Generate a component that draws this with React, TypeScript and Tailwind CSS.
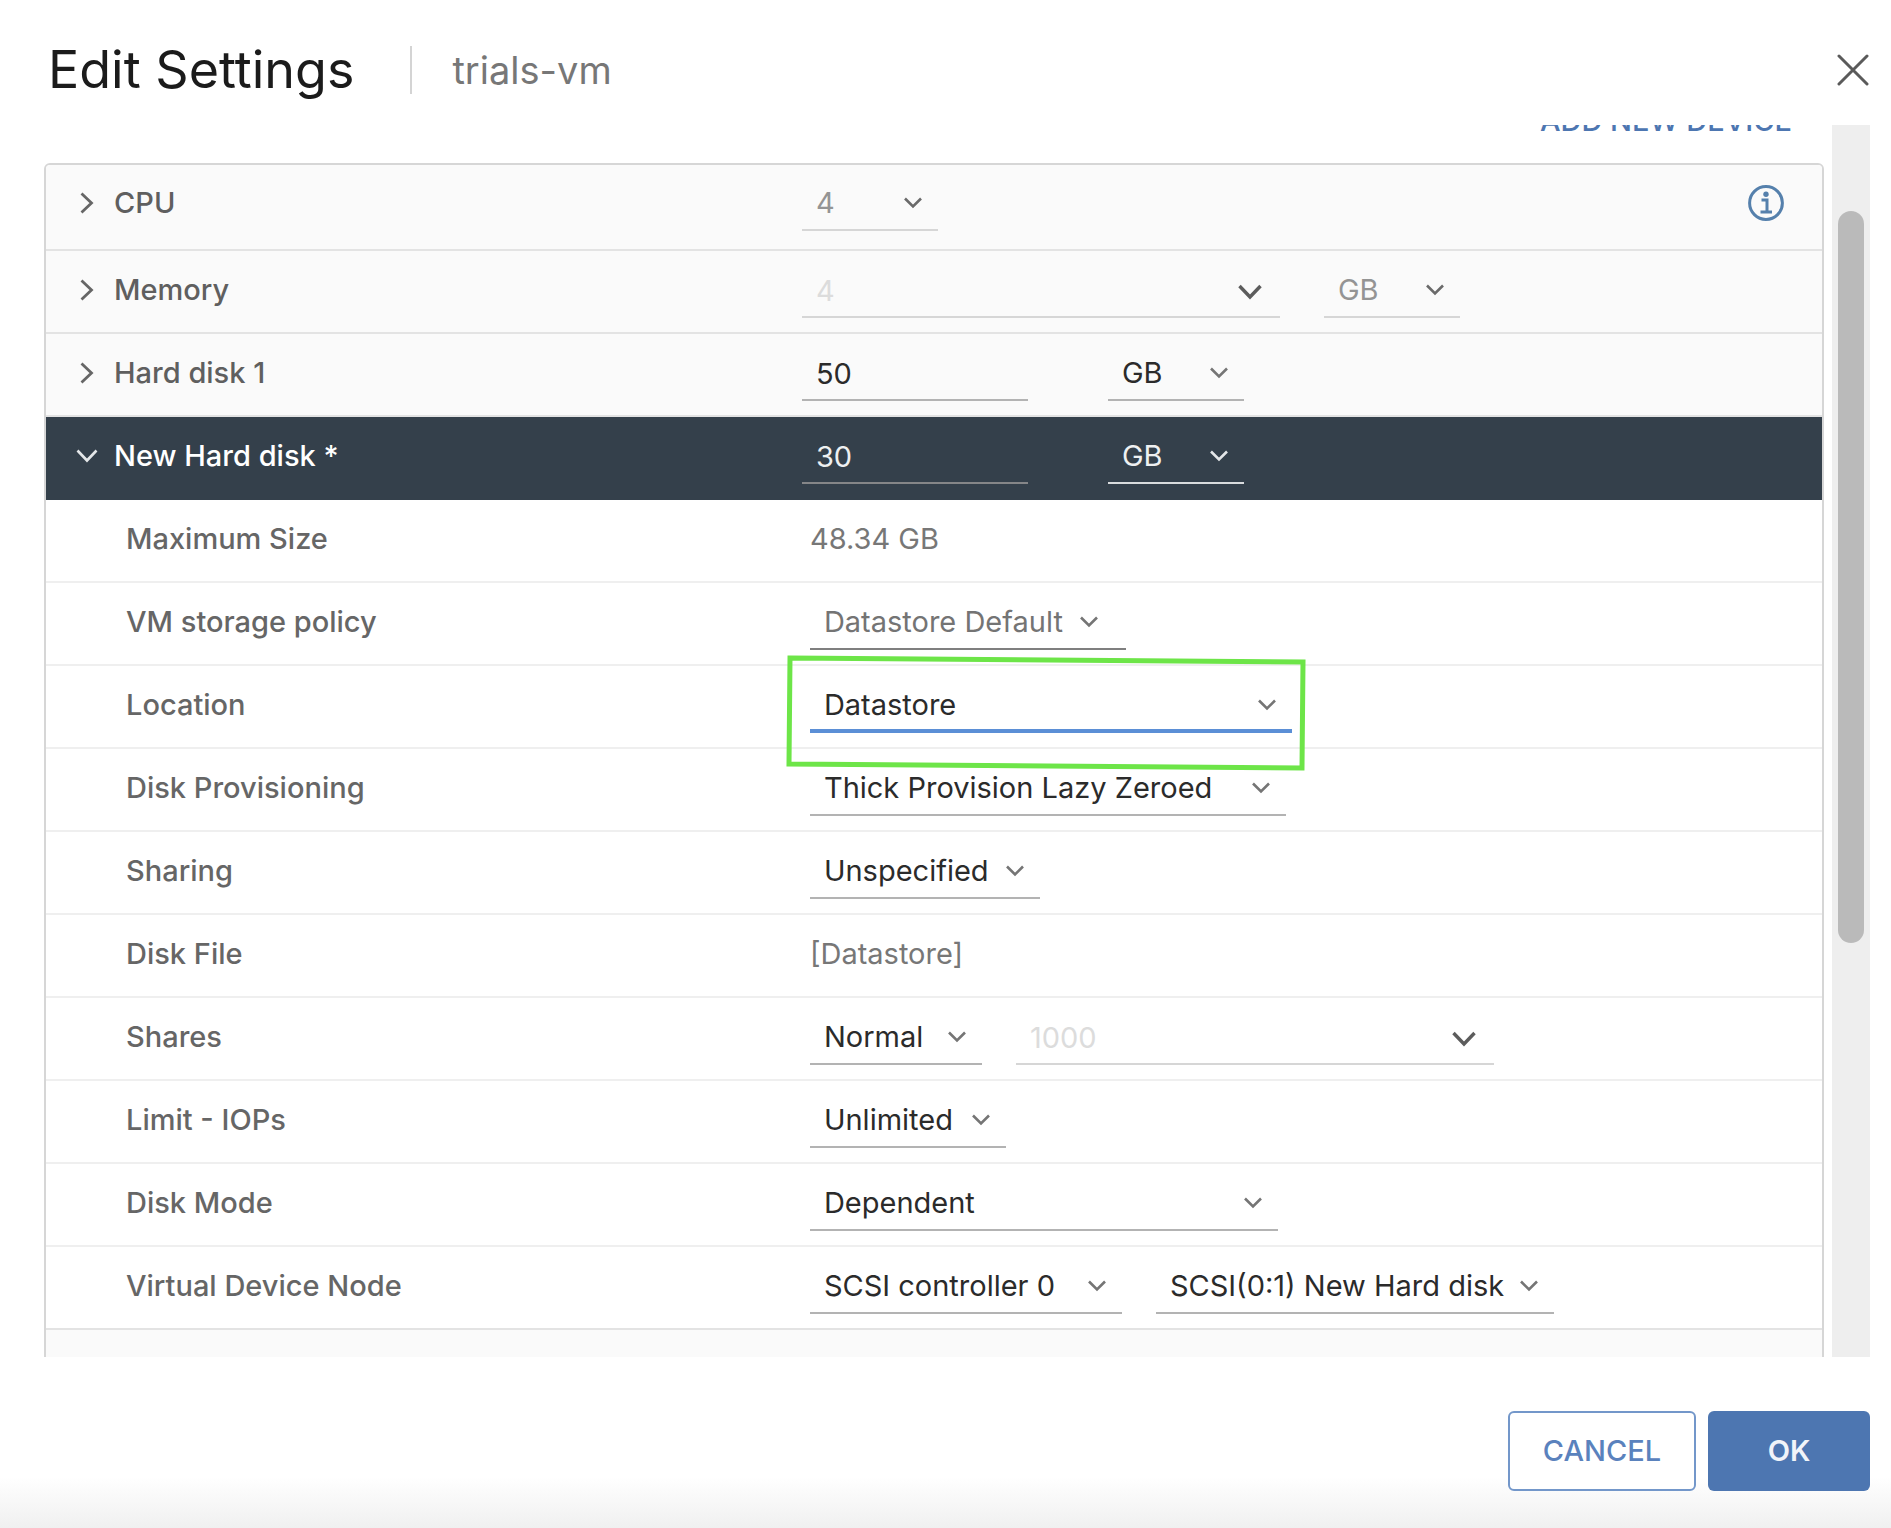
import React from "react";

type Tone = "normal" | "muted" | "inverse" | "focus" | "policy";

const selectTone: Record<Tone, string> = {
  normal: "border-b-2 border-[#b3b3b3] pb-2 text-[#2b2b2b]",
  muted: "border-b-2 border-[#d6d6d6] pb-2 text-[#949494]",
  inverse: "border-b-2 border-[#d9dcde] pb-2 text-[#eef0f1]",
  focus: "border-b-4 border-[#5b8fd6] pb-1.5 text-[#2b2b2b]",
  policy: "border-b-2 border-[#7f7f7f] pb-2 text-[#747474]",
};

const caretTone: Record<Tone, string> = {
  normal: "right-4 text-[#757575]",
  muted: "right-4 text-[#6a6a6a]",
  inverse: "right-4 text-[#e4e7e9]",
  focus: "right-4 text-[#757575]",
  policy: "right-7 text-[#757575]",
};

function Caret({ className }: { className: string }) {
  return (
    <svg
      aria-hidden="true"
      viewBox="0 0 18 12"
      className={"pointer-events-none absolute top-3 h-3 w-[18px] " + className}
      fill="none"
      stroke="currentColor"
      strokeWidth="2.6"
    >
      <path d="M1 1.5 L9 9.5 L17 1.5" />
    </svg>
  );
}

function Select({
  id,
  label,
  value,
  width,
  tone = "normal",
  disabled = false,
}: {
  id: string;
  label?: string;
  value: string;
  width: string;
  tone?: Tone;
  disabled?: boolean;
}) {
  return (
    <div className={"relative shrink-0 " + width}>
      <select
        id={id}
        aria-label={label}
        defaultValue={value}
        disabled={disabled}
        className={
          "block w-full appearance-none rounded-none bg-transparent pl-3.5 leading-9 opacity-100 outline-none " +
          selectTone[tone]
        }
      >
        <option>{value}</option>
      </select>
      <Caret className={caretTone[tone]} />
    </div>
  );
}

function Combo({ id, label, value }: { id: string; label?: string; value: string }) {
  return (
    <div className="relative w-[478px] shrink-0">
      <input
        id={id}
        aria-label={label}
        defaultValue={value}
        disabled
        className="block h-[46px] w-full border-b-2 border-[#d6d6d6] bg-transparent pb-2 pl-3.5 leading-9 text-[#dcdcdc] outline-none"
      />
      <svg
        aria-hidden="true"
        viewBox="0 0 24 16"
        className="pointer-events-none absolute top-3 right-[18px] h-4 w-6"
        fill="none"
        stroke="#5c5c5c"
        strokeWidth="3.4"
      >
        <path d="M1.5 2 L12 13 L22.5 2" />
      </svg>
    </div>
  );
}

function SizeInput({ id, value, tone }: { id: string; value: string; tone: string }) {
  return (
    <input
      id={id}
      defaultValue={value}
      className={
        "block h-[46px] w-[226px] shrink-0 border-b-2 bg-transparent pb-2 pl-3.5 leading-9 outline-none " + tone
      }
    />
  );
}

function DeviceRow({
  name,
  htmlFor,
  open = false,
  tall = false,
  children,
}: {
  name: string;
  htmlFor: string;
  open?: boolean;
  tall?: boolean;
  children: React.ReactNode;
}) {
  const row = open
    ? "border-[#34404b] bg-[#34404b] text-white"
    : "border-[#e3e3e3] bg-[#fafafa] text-[#5f5f5f]";
  const height = tall ? "h-[85px]" : "h-[83px]";
  const labelPad = tall ? "pb-7" : "pb-6";
  const valuePad = tall ? "pb-[18px]" : "pb-3.5";
  return (
    <tr className={"border-b-2 " + row + " " + height}>
      <th scope="row" className={"w-[42%] pl-[30px] text-left align-bottom font-medium " + labelPad}>
        <div className="flex items-center gap-4">
          <button
            type="button"
            aria-label={"Toggle " + name}
            aria-expanded={open}
            className="flex w-[22px] justify-center"
          >
            {open ? (
              <svg viewBox="0 0 22 14" className="h-3.5 w-[22px]" fill="none" stroke="#e4e7e9" strokeWidth="2.6">
                <path d="M1.5 1.5 L11 11.5 L20.5 1.5" />
              </svg>
            ) : (
              <svg viewBox="0 0 14 22" className="h-[22px] w-3.5" fill="none" stroke="#666666" strokeWidth="2.8">
                <path d="M1.5 1.5 L11.5 11 L1.5 20.5" />
              </svg>
            )}
          </button>
          <label htmlFor={htmlFor}>{name}</label>
        </div>
      </th>
      <td className={"pl-2.5 align-bottom " + valuePad}>{children}</td>
    </tr>
  );
}

function DetailRow({
  name,
  htmlFor,
  last = false,
  text = false,
  children,
}: {
  name: string;
  htmlFor?: string;
  last?: boolean;
  text?: boolean;
  children: React.ReactNode;
}) {
  return (
    <tr className={"h-[83px] border-b-2 bg-white " + (last ? "border-[#e3e3e3]" : "border-[#efefef]")}>
      <th scope="row" className="w-[42%] pb-6 pl-20 text-left align-bottom font-medium text-[#666666]">
        {htmlFor ? <label htmlFor={htmlFor}>{name}</label> : name}
      </th>
      <td className={"pl-[18px] align-bottom text-[#777777] " + (text ? "pb-6" : "pb-3.5")}>{children}</td>
    </tr>
  );
}

export default function App() {
  return (
    <main
      role="dialog"
      aria-labelledby="dialog-title"
      className="flex h-screen flex-col overflow-hidden bg-white font-['Inter','Liberation_Sans',sans-serif] text-[29px] leading-9"
    >
      <header className="flex h-[125px] shrink-0 items-center justify-between pt-3.5 pr-[22px] pl-12">
        <div className="flex items-center">
          <h1 id="dialog-title" className="text-[52px] leading-[60px] text-[#1b1b1b]">
            Edit Settings
          </h1>
          <div className="mr-10 ml-14 h-12 w-0.5 bg-[#d4d4d4]" />
          <p className="text-[38px] leading-[60px] text-[#777777]">trials-vm</p>
        </div>
        <button type="button" aria-label="Close">
          <svg viewBox="0 0 32 32" className="size-8" fill="none" stroke="#5a5a5a" strokeWidth="3" strokeLinecap="round">
            <path d="M2 2 L30 30 M30 2 L2 30" />
          </svg>
        </button>
      </header>

      <div className="flex min-h-0 flex-1 gap-2 pr-[21px] pl-11">
        <section className="flex min-w-0 flex-1 flex-col overflow-hidden">
          <button type="button" className="-mt-[22px] mr-8 mb-6 shrink-0 self-end font-medium text-[#4d76b1]">
            ADD NEW DEVICE
          </button>
          <div className="shrink-0 overflow-hidden rounded-t-md border-2 border-[#d6d6d6]">
            <table className="w-full table-fixed border-collapse">
              <tbody>
                <DeviceRow name="CPU" htmlFor="cpu" tall>
                  <div className="flex items-start justify-between pr-[38px]">
                    <Select id="cpu" value="4" width="w-[136px]" tone="muted" disabled />
                    <button type="button" aria-label="CPU information">
                      <svg viewBox="0 0 36 36" className="size-9" fill="none">
                        <circle cx="18" cy="18" r="16.4" stroke="#5580ac" strokeWidth="3" />
                        <circle cx="18" cy="9.2" r="2.7" fill="#5580ac" />
                        <path d="M13.5 15 H19 V27 M12.5 27 H24" stroke="#5580ac" strokeWidth="3" />
                      </svg>
                    </button>
                  </div>
                </DeviceRow>
                <DeviceRow name="Memory" htmlFor="memory">
                  <div className="flex gap-11">
                    <Combo id="memory" value="4" />
                    <Select id="memory-unit" label="Memory unit" value="GB" width="w-[136px]" tone="muted" disabled />
                  </div>
                </DeviceRow>
                <DeviceRow name="Hard disk 1" htmlFor="disk1">
                  <div className="flex gap-20">
                    <SizeInput id="disk1" value="50" tone="border-[#b3b3b3] text-[#2b2b2b]" />
                    <Select id="disk1-unit" label="Hard disk 1 unit" value="GB" width="w-[136px]" />
                  </div>
                </DeviceRow>
                <DeviceRow name="New Hard disk *" htmlFor="disk2" open>
                  <div className="flex gap-20">
                    <SizeInput id="disk2" value="30" tone="border-[#858688] text-[#eef0f1]" />
                    <Select id="disk2-unit" label="New hard disk unit" value="GB" width="w-[136px]" tone="inverse" />
                  </div>
                </DeviceRow>
                <DetailRow name="Maximum Size" text>
                  48.34 GB
                </DetailRow>
                <DetailRow name="VM storage policy" htmlFor="policy">
                  <Select id="policy" value="Datastore Default" width="w-[316px]" tone="policy" />
                </DetailRow>
                <DetailRow name="Location" htmlFor="location">
                  <div className="relative">
                    <Select id="location" value="Datastore" width="w-[482px]" tone="focus" />
                    <svg
                      aria-hidden="true"
                      viewBox="0 0 522 120"
                      className="pointer-events-none absolute -top-8 -left-6 h-[120px] w-[522px]"
                      fill="none"
                      stroke="#6de548"
                      strokeWidth="5"
                    >
                      <path d="M4 3 L517 7 L516 113 L3 109 Z" />
                    </svg>
                  </div>
                </DetailRow>
                <DetailRow name="Disk Provisioning" htmlFor="provisioning">
                  <Select id="provisioning" value="Thick Provision Lazy Zeroed" width="w-[476px]" />
                </DetailRow>
                <DetailRow name="Sharing" htmlFor="sharing">
                  <Select id="sharing" value="Unspecified" width="w-[230px]" />
                </DetailRow>
                <DetailRow name="Disk File" text>
                  [Datastore]
                </DetailRow>
                <DetailRow name="Shares" htmlFor="shares">
                  <div className="flex gap-[34px]">
                    <Select id="shares" value="Normal" width="w-[172px]" />
                    <Combo id="shares-value" label="Shares value" value="1000" />
                  </div>
                </DetailRow>
                <DetailRow name="Limit - IOPs" htmlFor="limit">
                  <Select id="limit" value="Unlimited" width="w-[196px]" />
                </DetailRow>
                <DetailRow name="Disk Mode" htmlFor="mode">
                  <Select id="mode" value="Dependent" width="w-[468px]" />
                </DetailRow>
                <DetailRow name="Virtual Device Node" htmlFor="controller" last>
                  <div className="flex gap-[34px]">
                    <Select id="controller" value="SCSI controller 0" width="w-[312px]" />
                    <Select id="node" label="Device node" value="SCSI(0:1) New Hard disk" width="w-[398px]" />
                  </div>
                </DetailRow>
                <tr className="h-[83px] bg-[#fafafa]">
                  <td colSpan={2} />
                </tr>
              </tbody>
            </table>
          </div>
        </section>
        <div aria-hidden="true" className="w-[38px] shrink-0 bg-[#eeeeee] px-1.5 pt-[86px]">
          <div className="h-[732px] rounded-full bg-[#bababa]" />
        </div>
      </div>

      <footer className="flex shrink-0 justify-end gap-3 bg-linear-to-b from-white from-70% to-[#f0f0f0] pt-[54px] pr-[21px] pb-[37px]">
        <button
          type="button"
          className="h-20 w-[188px] rounded-md border-2 border-[#7397ca] bg-white font-medium text-[#5a82bd]"
        >
          CANCEL
        </button>
        <button type="button" className="h-20 w-[162px] rounded-md bg-[#4d76b1] font-semibold text-[#f1f4f9]">
          OK
        </button>
      </footer>
    </main>
  );
}
